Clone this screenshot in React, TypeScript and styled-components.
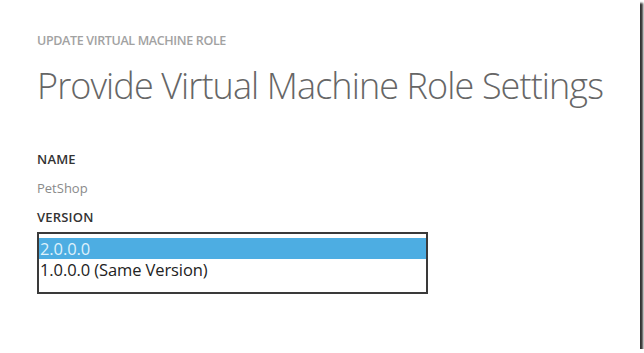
import React from 'react';
import styled, { createGlobalStyle } from 'styled-components';

const GlobalStyle = createGlobalStyle`
  html, body {
    margin: 0;
    padding: 0;
    background: #ffffff;
  }
  body {
    font-family: "Open Sans", "Liberation Sans", sans-serif;
  }
`;

const Frame = styled.div`
  box-sizing: border-box;
  width: 640px;
  height: 349px;
  background: #ffffff;
  box-shadow: 3px 3px 2px rgba(0, 0, 0, 0.8);
  padding: 32px 37px 0;
`;

const Eyebrow = styled.div`
  font-size: 12.5px;
  font-weight: 600;
  color: #a2a2a2;
  letter-spacing: -0.35px;
  line-height: 18px;
`;

const Title = styled.h1`
  margin: 16px 0 0;
  font-size: 36px;
  font-weight: 300;
  color: #666666;
  line-height: 40px;
  letter-spacing: -0.9px;
  white-space: nowrap;
`;

const Field = styled.div<{ $top: number }>`
  display: flex;
  flex-direction: column;
  margin-top: ${(p) => p.$top}px;
`;

const Label = styled.div`
  font-size: 13px;
  font-weight: 600;
  color: #333333;
  line-height: 16px;
  letter-spacing: 0.2px;
`;

const Value = styled.div`
  margin-top: 12px;
  font-size: 13px;
  color: #8a8a8a;
  line-height: 18px;
`;

const ListBox = styled.div`
  box-sizing: border-box;
  margin-top: 7px;
  width: 391px;
  height: 62px;
  border: 2px solid #3a3a3a;
  padding: 4px 0 0;
  display: flex;
  flex-direction: column;
`;

const Option = styled.div<{ $selected?: boolean }>`
  height: 21px;
  line-height: 21px;
  padding-left: 1px;
  font-size: 16.5px;
  letter-spacing: -0.1px;
  color: ${(p) => (p.$selected ? '#dff1fb' : '#222222')};
  background: ${(p) => (p.$selected ? '#4dade2' : 'transparent')};
`;

export default function App() {
  return (
    <>
      <GlobalStyle />
      <Frame>
        <Eyebrow>UPDATE VIRTUAL MACHINE ROLE</Eyebrow>
        <Title>Provide Virtual Machine Role Settings</Title>
        <Field $top={45}>
          <Label>NAME</Label>
          <Value>PetShop</Value>
        </Field>
        <Field $top={12}>
          <Label>VERSION</Label>
          <ListBox>
            <Option $selected>2.0.0.0</Option>
            <Option>1.0.0.0 (Same Version)</Option>
          </ListBox>
        </Field>
      </Frame>
    </>
  );
}
